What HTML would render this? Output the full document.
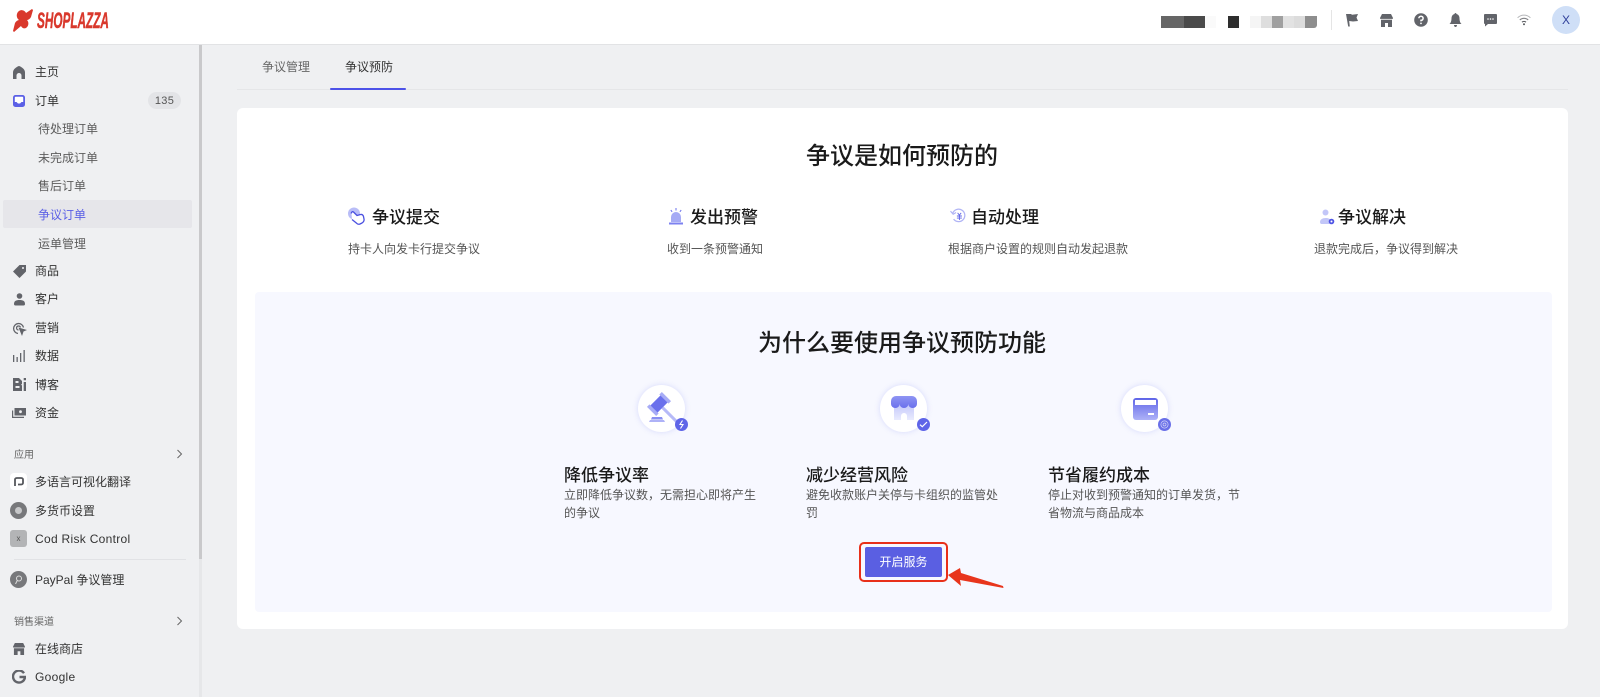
<!DOCTYPE html>
<html lang="zh"><head><meta charset="utf-8"><title>争议预防</title>
<style>
*{box-sizing:border-box;margin:0;padding:0}
html,body{width:1600px;height:697px;overflow:hidden;background:#eff0f2;font-family:"Liberation Sans","Noto Sans CJK SC",sans-serif;color:#222}
.a{position:absolute}
.t{position:absolute;line-height:20px;height:20px;white-space:nowrap;font-size:12px}
.s{color:#333}
.u{color:#5c5c5c}
.h{font-size:17px;font-weight:500;color:#1a1a1a}
.d{color:#555}
svg{position:absolute;display:block}
.g{fill:#62646a}
</style></head><body>
<!-- header -->
<div class="a" style="left:0;top:0;width:1600px;height:45px;background:#fff;border-bottom:1px solid #e2e3e5"></div>
<svg style="left:13px;top:9px" width="21" height="23" viewBox="0 0 21 23"><path d="M6 2C9 0 12 2 13 4L19 0l1 1-2 7c-1 2-3 3-4 3 2 2 2 6-1 8-2 1-4 0-5-2l-7 6-1-1 2-8c1-2 3-3 4-3C3 9 3 4 6 2z" fill="#d9382c"/></svg>
<div class="t" style="left:37px;top:8px;font-size:22px;line-height:25px;height:25px;font-weight:700;font-style:italic;color:#d9382c;transform-origin:0 50%;transform:scaleX(.535);-webkit-text-stroke:.5px #d9382c">SHOPLAZZA</div>
<div class="a" style="left:1161px;top:16px;width:23px;height:12px;background:#666"></div>
<div class="a" style="left:1184px;top:16px;width:21px;height:12px;background:#4a4a4a"></div>
<div class="a" style="left:1205px;top:16px;width:11px;height:12px;background:#fafafa"></div>
<div class="a" style="left:1228px;top:16px;width:11px;height:12px;background:#2e2e2e"></div>
<div class="a" style="left:1250px;top:16px;width:11px;height:12px;background:#f5f5f5"></div>
<div class="a" style="left:1261px;top:16px;width:11px;height:12px;background:#dedede"></div>
<div class="a" style="left:1272px;top:16px;width:11px;height:12px;background:#a0a0a0"></div>
<div class="a" style="left:1283px;top:16px;width:11px;height:12px;background:#e2e2e2"></div>
<div class="a" style="left:1294px;top:16px;width:11px;height:12px;background:#dcdcdc"></div>
<div class="a" style="left:1305px;top:16px;width:12px;height:12px;background:#8e8e8e;border-radius:0 0 3px 0"></div>
<div class="a" style="left:1331px;top:10px;width:1px;height:20px;background:#e5e5e5"></div>
<svg style="left:1345px;top:13px" width="14" height="14" viewBox="0 0 14 14"><path class="g" d="M1 1h5l1 .8L13 1l-1.500 3.500L13 8l-5 .5L4.200 8l.6 5.500H3.200z"/></svg>
<svg style="left:1380px;top:14px" width="13" height="13" viewBox="0 0 13 13"><path class="g" d="M2 0h9l2 4a2 2 0 0 1-1 1.700V13H8V9H5v4H1V5.700A2 2 0 0 1 0 4z"/><path d="M0 5.300h13" stroke="#fff" stroke-width=".8"/></svg>
<svg style="left:1414px;top:13px" width="14" height="14" viewBox="0 0 14 14"><circle class="g" cx="7" cy="7" r="6.800"/><path d="M4.900 5.300A2.100 2.100 0 1 1 7 7.400v1" stroke="#fff" stroke-width="1.500" fill="none"/><circle cx="7" cy="10.400" r=".9" fill="#fff"/></svg>
<svg style="left:1449px;top:13px" width="13" height="14" viewBox="0 0 12 14"><path class="g" d="M6 0c.6 0 1 .5 1 1 2 .5 3 2.200 3 4.500 0 2.500.8 4.500 2 5.500H0c1.200-1 2-3 2-5.500C2 3.200 3 1.500 5 1c0-.5.4-1 1-1zM4.500 12h3C7.500 13 7 14 6 14s-1.500-1-1.500-2z"/></svg>
<svg style="left:1484px;top:14px" width="13" height="13" viewBox="0 0 13 13"><path class="g" d="M1 0h11a1 1 0 0 1 1 1v8a1 1 0 0 1-1 1H4l-3 2.500V10a1 1 0 0 1-1-1V1a1 1 0 0 1 1-1z"/><circle cx="4" cy="5" r=".8" fill="#fff"/><circle cx="6.500" cy="5" r=".8" fill="#fff"/><circle cx="9" cy="5" r=".8" fill="#fff"/></svg>
<svg style="left:1517px;top:14px" width="14" height="12" viewBox="0 0 14 12" fill="none"><path d="M.6 3.800A9 9 0 0 1 13.400 3.800" stroke="#b5b6b9" stroke-width="1"/><path d="M2.800 6A6 6 0 0 1 11.200 6" stroke="#808185" stroke-width="1.100"/><path d="M5 8.200a3 3 0 0 1 4 0" stroke="#55575c" stroke-width="1.200"/><circle cx="7" cy="10.300" r="1" fill="#55575c"/></svg>
<div class="a" style="left:1552px;top:6px;width:28px;height:28px;border-radius:50%;background:#cfdff7;color:#30409a;font-size:12px;line-height:28px;text-align:center">X</div>

<!-- sidebar -->
<div class="a" style="left:199px;top:45px;width:3px;height:652px;background:#e6e7e9"></div>
<div class="a" style="left:199px;top:45px;width:3px;height:514px;background:#c9c9cb"></div>
<svg style="left:13px;top:66px" width="12" height="13" viewBox="0 0 12 13"><path class="g" d="M6 0c1 0 4 2 5 3.500.7 1 1 2 1 3V13H8.500V9.500a2.500 2.500 0 0 0-5 0V13H0V6.500c0-1 .3-2 1-3C2 2 5 0 6 0z"/></svg>
<div class="t s" style="left:35px;top:62px">主页</div>
<svg style="left:13px;top:95px" width="12" height="12" viewBox="0 0 12 12"><rect width="12" height="12" rx="2.500" fill="#5b60e6"/><path d="M1.800 2.600a.8.800 0 0 1 .8-.8h6.800a.8.800 0 0 1 .8.800V7H8.500L7 8.500H5L3.500 7H1.800z" fill="#fff"/></svg>
<div class="t s" style="left:35px;top:91px">订单</div>
<div class="a" style="left:148px;top:92px;width:33px;height:17px;border-radius:9px;background:#e3e4e7;color:#555;font-size:11px;line-height:18px;text-align:center;letter-spacing:.3px">135</div>
<div class="t u" style="left:38px;top:119px">待处理订单</div>
<div class="t u" style="left:38px;top:148px">未完成订单</div>
<div class="t u" style="left:38px;top:176px">售后订单</div>
<div class="a" style="left:3px;top:200px;width:189px;height:28px;background:#e6e6ea;border-radius:2px"></div>
<div class="t" style="left:38px;top:205px;color:#5b60e6">争议订单</div>
<div class="t u" style="left:38px;top:234px">运单管理</div>
<svg style="left:13px;top:265px" width="13" height="13" viewBox="0 0 13 13"><path class="g" d="M6.500 0H13v6.500L6.500 13 0 6.500zM10 2a1 1 0 1 0 .01 0z" fill-rule="evenodd"/></svg>
<div class="t s" style="left:35px;top:261px">商品</div>
<svg style="left:14px;top:293px" width="11" height="13" viewBox="0 0 11 13"><circle class="g" cx="5.500" cy="3" r="2.800"/><path class="g" d="M0 11c0-3 2-4 5.500-4S11 8 11 11c0 1-.5 1.500-1.500 1.500h-8C.5 12.500 0 12 0 11z"/></svg>
<div class="t s" style="left:35px;top:289px">客户</div>
<svg style="left:12px;top:322px" width="15" height="14" viewBox="0 0 15 14" fill="none"><path d="M6 11.500a5 5 0 1 1 5.500-6" stroke="#62646a" stroke-width="1.300"/><path d="M6.500 8a2 2 0 1 1 2-2.500" stroke="#62646a" stroke-width="1.200"/><path class="g" d="M6.500 5.500L15 8l-3.500 1.500L10 14z"/></svg>
<div class="t s" style="left:35px;top:318px">营销</div>
<svg style="left:13px;top:350px" width="12" height="12" viewBox="0 0 12 12"><path class="g" d="M0 5h1.300v7H0zM3.500 7h1.300v5H3.500zM7 3h1.300v9H7zM10.500 0h1.300v12h-1.300z"/></svg>
<div class="t s" style="left:35px;top:346px">数据</div>
<svg style="left:13px;top:378px" width="13" height="13" viewBox="0 0 13 13"><path class="g" d="M0 0h6l3 3v3l-1 .5L9 7.500V13H0zM2.500 3v2h3V3zM2.500 8v2h4V8zM10.700 0h2.300v2.300h-2.300zM10.700 4H13v9h-2.300z" fill-rule="evenodd"/></svg>
<div class="t s" style="left:35px;top:375px">博客</div>
<svg style="left:12px;top:408px" width="14" height="10" viewBox="0 0 14 10"><path class="g" d="M2.500 0H14v7.500H2.500zM0 2.500h1.200v6.200H12V10H0z"/><circle cx="8.500" cy="3.700" r="1.400" fill="#eff0f2"/></svg>
<div class="t s" style="left:35px;top:403px">资金</div>
<div class="t" style="left:14px;top:446px;font-size:10px;color:#666">应用</div>
<svg style="left:176px;top:449px" width="7" height="10" viewBox="0 0 7 10" fill="none"><path d="M1.500 1l4 4-4 4" stroke="#666" stroke-width="1"/></svg>
<div class="a" style="left:10px;top:473px;width:17px;height:17px;border-radius:4px;background:#fff"></div>
<svg style="left:13px;top:477px" width="12" height="10" viewBox="0 0 12 10" fill="none"><path d="M2 9V2.500C2 1.500 3 1 4 1h4c1 0 2 .5 2 1.500V6c0 1-1 1.500-2 1.500H5" stroke="#55575c" stroke-width="1.800"/></svg>
<div class="t s" style="left:35px;top:472px">多语言可视化翻译</div>
<div class="a" style="left:10px;top:502px;width:17px;height:17px;border-radius:50%;background:#77787b"></div>
<div class="a" style="left:15px;top:507px;width:7px;height:7px;border-radius:50%;background:#c6c7c9"></div>
<div class="t s" style="left:35px;top:501px">多货币设置</div>
<div class="a" style="left:10px;top:530px;width:17px;height:17px;border-radius:3px;background:#b3b4b6;color:#555;font-size:8px;line-height:17px;text-align:center">x</div>
<div class="t s" style="left:35px;top:529px;font-size:12px;letter-spacing:.3px">Cod Risk Control</div>
<div class="a" style="left:14px;top:559px;width:172px;height:1px;background:#e1e2e5"></div>
<div class="a" style="left:10px;top:571px;width:17px;height:17px;border-radius:50%;background:#77787b"></div>
<svg style="left:14px;top:575px" width="9" height="9" viewBox="0 0 9 9" fill="none"><circle cx="5" cy="3.500" r="2.500" stroke="#ddd" stroke-width="1"/><path d="M3.500 5L1.500 9" stroke="#ddd"/></svg>
<div class="t s" style="left:35px;top:570px">PayPal 争议管理</div>
<div class="t" style="left:14px;top:613px;font-size:10px;color:#666">销售渠道</div>
<svg style="left:176px;top:616px" width="7" height="10" viewBox="0 0 7 10" fill="none"><path d="M1.500 1l4 4-4 4" stroke="#666" stroke-width="1"/></svg>
<svg style="left:13px;top:643px" width="12" height="12" viewBox="0 0 13 13"><path class="g" d="M2 0h9l2 4a2 2 0 0 1-1 1.700V13H8V9H5v4H1V5.700A2 2 0 0 1 0 4z"/><path d="M0 5.300h13" stroke="#eff0f2" stroke-width=".8"/></svg>
<div class="t s" style="left:35px;top:639px">在线商店</div>
<svg style="left:12px;top:670px" width="14" height="14" viewBox="0 0 14 14" fill="none"><path d="M12 3.200A6 6 0 1 0 13 7H7.500" stroke="#62646a" stroke-width="2.400"/></svg>
<div class="t s" style="left:35px;top:667px;letter-spacing:.3px">Google</div>

<!-- tabs -->
<div class="a" style="left:237px;top:89px;width:1331px;height:1px;background:#e5e6e8"></div>
<div class="t" style="left:262px;top:57px;color:#666">争议管理</div>
<div class="t" style="left:345px;top:57px;color:#333">争议预防</div>
<div class="a" style="left:330px;top:88px;width:76px;height:2px;background:#4d52e8;border-radius:1px"></div>

<!-- card -->
<div class="a" style="left:237px;top:108px;width:1331px;height:521px;background:#fff;border-radius:6px"></div>
<div class="t" style="left:806px;top:142px;height:30px;line-height:30px;font-size:24px;font-weight:500;color:#1a1a1a">争议是如何预防的</div>

<svg style="left:347px;top:207px" width="18" height="18" viewBox="0 0 18 18"><circle cx="7" cy="6.500" r="6" fill="#b9bdf7"/><path d="M4.500 6.500a1.300 1.300 0 0 1 2-1.500l3.500 3.500 3.500-1c1.500-.3 2.500.5 3 2l.5 2.500c.3 1.500-.5 3-2 4l-2 1c-1.200.5-2.300.3-3.200-.6L5 12.500" fill="#fff" stroke="#4a50e0" stroke-width="1.300"/></svg>
<div class="t h" style="left:372px;top:208px">争议提交</div>
<div class="t d" style="left:348px;top:239px">持卡人向发卡行提交争议</div>

<svg style="left:669px;top:207px" width="14" height="18" viewBox="0 0 14 18"><path d="M2 15V10a5 5 0 0 1 10 0v5z" fill="#a6abf5"/><rect x="0" y="15.500" width="14" height="2" fill="#7c82f0"/><path d="M7 1v2.500M1.800 3l1.300 1.800M12.200 3l-1.300 1.800" stroke="#6a70ec" stroke-width="1"/></svg>
<div class="t h" style="left:690px;top:208px">发出预警</div>
<div class="t d" style="left:667px;top:239px">收到一条预警通知</div>

<svg style="left:950px;top:208px" width="17" height="16" viewBox="0 0 19 18" fill="none"><path d="M3 6A7 7 0 1 1 4 12.500" stroke="#b0b4f5" stroke-width="1.400"/><path d="M.5 3.500L3.500 7l3.300-2" stroke="#b0b4f5" stroke-width="1.300"/><path d="M8.500 5.500L10.500 8l2-2.500M7.700 9h5.600M7.700 11.300h5.600M10.500 8v5.500" stroke="#5b60e6" stroke-width="1"/></svg>
<div class="t h" style="left:971px;top:208px">自动处理</div>
<div class="t d" style="left:948px;top:239px">根据商户设置的规则自动发起退款</div>

<svg style="left:1320px;top:209px" width="15" height="16" viewBox="0 0 15 16"><circle cx="5.500" cy="3.500" r="3" fill="#c2c6f8"/><path d="M0 13c0-2.500 2.500-4 5.500-4s5 1 5.500 2.500L9.500 15H1.500C.5 15 0 14 0 13z" fill="#c2c6f8"/><circle cx="11.500" cy="12.500" r="2.800" fill="#4f55e4"/><circle cx="11.500" cy="12.500" r="1" fill="#fff"/></svg>
<div class="t h" style="left:1338px;top:208px">争议解决</div>
<div class="t d" style="left:1314px;top:239px">退款完成后，争议得到解决</div>

<!-- panel -->
<div class="a" style="left:255px;top:292px;width:1297px;height:320px;background:#f7f8ff;border-radius:4px"></div>
<div class="t" style="left:758px;top:329px;height:30px;line-height:30px;font-size:24px;font-weight:500;color:#1a1a1a">为什么要使用争议预防功能</div>

<!-- icon 1 -->
<div class="a" style="left:638px;top:385px;width:47px;height:47px;border-radius:50%;background:#fff;box-shadow:0 0 6px rgba(120,130,240,.25)"></div>
<svg style="left:645px;top:390px" width="34" height="34" viewBox="0 0 34 34"><g transform="translate(14 14) rotate(45)"><rect x="5" y="-1.500" width="20" height="3" fill="#b6baf8"/><rect x="-5" y="-8" width="10" height="16" fill="#6a70ec"/><rect x="-6.500" y="-10.500" width="13" height="3.500" fill="#a7acf6"/><rect x="-6.500" y="7" width="13" height="3.500" fill="#a7acf6"/></g><path d="M7 27h10l1 2.500H6z" fill="#8a90f2"/><path d="M5 30h14l1 2H4z" fill="#aeb2f7"/></svg>
<div class="a" style="left:675px;top:418px;width:13px;height:13px;border-radius:50%;background:#5f65e8"></div>
<svg style="left:677px;top:420px" width="9" height="9" viewBox="0 0 9 9" fill="none"><path d="M5.500 .5L3 4.500h3L3.500 8.500" stroke="#fff" stroke-width="1.100"/></svg>
<div class="t h" style="left:564px;top:466px">降低争议率</div>
<div class="t d" style="left:564px;top:485px">立即降低争议数，无需担心即将产生</div>
<div class="t d" style="left:564px;top:503px">的争议</div>

<!-- icon 2 -->
<div class="a" style="left:880px;top:385px;width:47px;height:47px;border-radius:50%;background:#fff;box-shadow:0 0 6px rgba(120,130,240,.25)"></div>
<svg style="left:891px;top:396px" width="26" height="25" viewBox="0 0 26 25"><defs><linearGradient id="a1" x1="0" y1="0" x2="0" y2="1"><stop offset="0" stop-color="#c4c8fa"/><stop offset="1" stop-color="#e9ebfe"/></linearGradient><linearGradient id="a2" x1="0" y1="0" x2="0" y2="1"><stop offset="0" stop-color="#8f94f3"/><stop offset="1" stop-color="#6a70ec"/></linearGradient></defs><path d="M3 8h20v16h-7v-4a3 3 0 0 0-6 0v4H3z" fill="url(#a1)"/><path d="M5 0h16a5 5 0 0 1 5 5v3a4.330 4 0 0 1-8.670 0 4.330 4 0 0 1-8.660 0A4.330 4 0 0 1 0 8V5a5 5 0 0 1 5-5z" fill="url(#a2)"/></svg>
<div class="a" style="left:917px;top:418px;width:13px;height:13px;border-radius:50%;background:#5f65e8"></div>
<svg style="left:919px;top:420px" width="9" height="9" viewBox="0 0 9 9" fill="none"><path d="M1 4.700l2.300 2L8 2" stroke="#fff" stroke-width="1.200"/></svg>
<div class="t h" style="left:806px;top:466px">减少经营风险</div>
<div class="t d" style="left:806px;top:485px">避免收款账户关停与卡组织的监管处</div>
<div class="t d" style="left:806px;top:503px">罚</div>

<!-- icon 3 -->
<div class="a" style="left:1121px;top:385px;width:47px;height:47px;border-radius:50%;background:#fff;box-shadow:0 0 6px rgba(120,130,240,.25)"></div>
<svg style="left:1133px;top:398px" width="25" height="22" viewBox="0 0 25 22"><defs><linearGradient id="a3" x1="0" y1="0" x2="0" y2="1"><stop offset="0" stop-color="#5f65e8"/><stop offset="1" stop-color="#aeb2f7"/></linearGradient></defs><rect width="25" height="22" rx="3" fill="url(#a3)"/><rect x="2" y="2" width="21" height="5" fill="#fff"/><rect x="15" y="15" width="6" height="2" fill="#fff"/></svg>
<div class="a" style="left:1158px;top:418px;width:13px;height:13px;border-radius:50%;background:#6a70e8"></div>
<svg style="left:1160px;top:420px" width="9" height="9" viewBox="0 0 9 9" fill="none"><circle cx="4.500" cy="4.500" r="3.600" stroke="#fff" stroke-opacity=".7" stroke-width=".7"/><circle cx="4.500" cy="4.500" r="1.500" stroke="#fff" stroke-opacity=".7" stroke-width=".7"/></svg>
<div class="t h" style="left:1048px;top:466px">节省履约成本</div>
<div class="t d" style="left:1048px;top:485px">停止对收到预警通知的订单发货，节</div>
<div class="t d" style="left:1048px;top:503px">省物流与商品成本</div>

<!-- button -->
<div class="a" style="left:859px;top:542px;width:89px;height:40px;border:2px solid #e8301a;border-radius:5px"></div>
<div class="a" style="left:865px;top:547px;width:77px;height:30px;background:#5a5fe2;border-radius:2px;color:#fff;font-size:12px;line-height:30px;text-align:center">开启服务</div>
<svg style="left:945px;top:566px" width="60" height="26" viewBox="0 0 60 26"><path d="M3 9L15 2l1 5 42 13 .5 2L15 14l1 6z" fill="#e8351c"/></svg>
</body></html>
